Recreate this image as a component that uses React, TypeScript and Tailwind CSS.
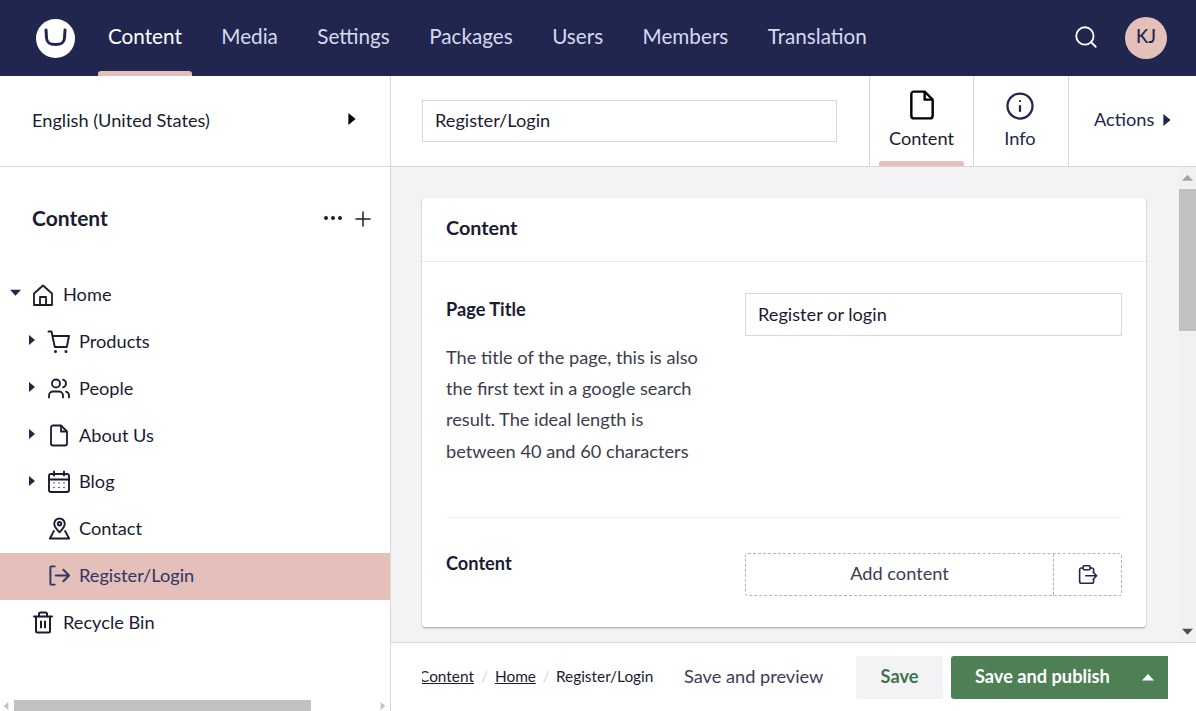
import { Info, Search, Users, Ellipsis, Plus } from "lucide-react";
import type { ReactNode } from "react";

const navItems = ["Media", "Settings", "Packages", "Users", "Members", "Translation"];

const PageIcon = ({ className }: { className: string }) => (
  <svg viewBox="0 0 24 24" fill="none" stroke="currentColor" strokeWidth="1.800" strokeLinejoin="round" className={className}>
    <path d="M14 2H6a2 2 0 0 0-2 2v16a2 2 0 0 0 2 2h12a2 2 0 0 0 2-2V8z" />
    <path d="M14 2v6h6" />
  </svg>
);

const HomeIcon = () => (
  <svg viewBox="0 0 24 24" fill="none" stroke="currentColor" strokeWidth="1.800" strokeLinejoin="round" className="h-[26px] w-[26px]">
    <path d="M3 22V10.500L12 2.500l9 8V22z" />
    <path d="M9 22v-8h6v8" />
  </svg>
);

const CartIcon = () => (
  <svg viewBox="0 0 24 24" fill="none" stroke="currentColor" strokeWidth="1.900" strokeLinecap="round" strokeLinejoin="round" className="h-[24px] w-[24px]">
    <path d="M1.500 1.500h3l3.300 15.500h12l2.200-11H5.500" />
    <circle cx="8.500" cy="21.500" r="0.600" fill="currentColor" />
    <circle cx="19" cy="21.500" r="0.600" fill="currentColor" />
  </svg>
);

const CalendarIcon = () => (
  <svg viewBox="0 0 24 24" fill="none" stroke="currentColor" strokeWidth="1.900" strokeLinecap="round" strokeLinejoin="round" className="h-[24px] w-[24px]">
    <rect x="2" y="4" width="20" height="18" rx="2" />
    <path d="M7 1.500v4M17 1.500v4M2 9.500h20" />
    <path strokeWidth="1.400" d="M7 13h.01M12 13h.01M17 13h.01M7 17.500h.01M12 17.500h.01M17 17.500h.01" />
  </svg>
);

const PinIcon = () => (
  <svg viewBox="0 0 24 24" fill="none" stroke="currentColor" strokeWidth="2" strokeLinejoin="round" className="h-[23px] w-[23px]">
    <path d="M12 16c-3-3.200-5.500-5.800-5.500-9a5.500 5.500 0 0 1 11 0c0 3.200-2.500 5.800-5.500 9z" />
    <circle cx="12" cy="7" r="1.800" />
    <path d="M6.500 14 2 22.500h20L17.500 14" />
  </svg>
);

const LoginIcon = () => (
  <svg viewBox="0 0 24 24" fill="none" stroke="currentColor" strokeWidth="2" strokeLinecap="round" strokeLinejoin="round" className="h-[23px] w-[23px]">
    <path d="M7 2.500H3.500a1 1 0 0 0-1 1v17a1 1 0 0 0 1 1H7" />
    <path d="M8 12h14M16 6l6 6-6 6" />
  </svg>
);

const BinIcon = () => (
  <svg viewBox="0 0 24 24" fill="none" stroke="currentColor" strokeWidth="2" strokeLinecap="round" strokeLinejoin="round" className="h-[25px] w-[25px]">
    <path d="M3 6h18M5 6v14.500a1.500 1.500 0 0 0 1.500 1.500h11a1.500 1.500 0 0 0 1.500-1.500V6" />
    <path d="M8 6V3.500A1.500 1.500 0 0 1 9.500 2h5A1.500 1.500 0 0 1 16 3.500V6" />
    <path d="M10 11v6M14 11v6" />
  </svg>
);

const PasteIcon = () => (
  <svg viewBox="0 0 24 24" fill="none" stroke="currentColor" strokeWidth="1.800" strokeLinecap="round" strokeLinejoin="round" className="h-[21px] w-[21px]">
    <path d="M7 4.500H5a2 2 0 0 0-2 2V20a2 2 0 0 0 2 2h12a2 2 0 0 0 2-2v-2.500M19 9.500v-3a2 2 0 0 0-2-2h-2" />
    <rect x="7" y="2" width="8" height="4.500" rx="1" />
    <path d="M10 13.500h12.500M18.500 9.500l4 4-4 4" />
  </svg>
);

const Caret = ({ down, up, className }: { down?: boolean; up?: boolean; className: string }) => (
  <svg viewBox="0 0 10 10" fill="currentColor" className={`shrink-0 ${className}`}>
    {down ? <path d="M0 2.500h10L5 8z" /> : up ? <path d="M0 8h10L5 2.500z" /> : <path d="M2 0v10l6-5z" />}
  </svg>
);

const TreeRow = ({ icon, label, depth, caret, active }: { icon: ReactNode; label: string; depth: 0 | 1; caret?: "down" | "right"; active?: boolean }) => (
  <div className={`flex h-[46.800px] items-center pb-[1px] ${depth === 0 ? "pl-[9px]" : "pl-[25px]"} ${active ? "bg-[#e5bfb9] text-[#2f3564]" : "text-[#1b1b32]"}`}>
    <div className="flex w-[10px] text-[#21264f]">
      {caret === "down" && <Caret down className="mb-[4px] ml-[1px] h-[11px] w-[11px]" />}
      {caret === "right" && <Caret className="mb-[3px] ml-[2px] h-[10px] w-[10px]" />}
    </div>
    <div className="ml-[12px] flex w-[24px] justify-center">{icon}</div>
    <span className="ml-[8px] text-[18.200px]">{label}</span>
  </div>
);

export default function App() {
  return (
    <div className="flex h-[711px] w-[1196px] flex-col overflow-hidden bg-white font-['Lato',sans-serif] text-[#1b1b32]">
      <header className="flex h-[76px] shrink-0 items-center bg-[#21264f] text-[#d5d9ee]">
        <div className="ml-[36px] flex h-[39px] w-[39px] items-center justify-center rounded-full bg-white">
          <svg viewBox="0 0 39 39" fill="none" stroke="#21264f" strokeWidth="3" strokeLinecap="round" className="h-[39px] w-[39px]">
            <path d="M10 11l.5 8c.3 5 3 6.500 9 6.500s8.700-1.500 9-6.500l.5-8" />
          </svg>
        </div>
        <nav className="ml-[33px] flex h-full items-center gap-[39.400px] text-[20.700px]">
          <div className="relative flex h-full items-center text-white">
            <span className="mb-[2px]">Content</span>
            <div className="absolute bottom-0 left-[-10px] right-[-10px] h-[5px] rounded-t-[3px] bg-[#e5bfb9]" />
          </div>
          {navItems.map((item) => (
            <span key={item} className="mb-[2px]">{item}</span>
          ))}
        </nav>
        <Search className="mb-[2px] ml-auto h-[26px] w-[26px] text-white" strokeWidth={1.700} />
        <div className="ml-[26px] mr-[29px] flex h-[42px] w-[42px] items-center justify-center rounded-full bg-[#e5bfb9] pb-[2px] text-[18.200px] font-medium text-[#21264f]">
          KJ
        </div>
      </header>

      <div className="flex min-h-0 flex-1">
        <aside className="relative flex w-[391px] shrink-0 flex-col border-r border-[#d8d7d9]">
          <div className="flex h-[91px] shrink-0 items-center justify-between border-b border-[#d8d7d9] pb-[1px] pl-[32px] pr-[32px] text-[18.200px]">
            <span>English (United States)</span>
            <Caret className="mb-[3px] h-[12px] w-[12px] text-black" />
          </div>
          <div className="flex items-center justify-between pl-[32px] pr-[15px] pt-[35px]">
            <h2 className="text-[21px] font-bold">Content</h2>
            <div className="flex items-center gap-[6px]">
              <Ellipsis className="h-[24px] w-[24px]" strokeWidth={2} />
              <Plus className="mt-[3px] h-[24px] w-[24px]" strokeWidth={1.500} />
            </div>
          </div>
          <div className="mt-[38.500px]">
            <TreeRow depth={0} caret="down" icon={<HomeIcon />} label="Home" />
            <TreeRow depth={1} caret="right" icon={<CartIcon />} label="Products" />
            <TreeRow depth={1} caret="right" icon={<Users className="h-[25px] w-[25px]" strokeWidth={1.800} />} label="People" />
            <TreeRow depth={1} caret="right" icon={<PageIcon className="h-[25px] w-[25px]" />} label="About Us" />
            <TreeRow depth={1} caret="right" icon={<CalendarIcon />} label="Blog" />
            <TreeRow depth={1} icon={<PinIcon />} label="Contact" />
            <TreeRow depth={1} active icon={<LoginIcon />} label="Register/Login" />
            <TreeRow depth={0} icon={<BinIcon />} label="Recycle Bin" />
          </div>
          <div className="absolute bottom-0 left-0 right-0 flex h-[11px] items-center bg-white">
            <Caret className="ml-[2px] h-[8px] w-[8px] rotate-180 text-[#c4c4c4]" />
            <div className="ml-[4px] h-[11px] w-[297px] bg-[#c1c1c1]" />
            <Caret className="ml-auto mr-[3px] h-[8px] w-[8px] text-[#c4c4c4]" />
          </div>
        </aside>

        <main className="flex min-w-0 flex-1 flex-col">
          <div className="flex h-[91px] shrink-0 items-stretch border-b border-[#d8d7d9]">
            <div className="flex flex-1 items-center pl-[31px]">
              <div className="flex h-[42px] w-[415px] items-center border border-[#d8d7d9] px-[12px] pb-[1px] text-[18.200px]">Register/Login</div>
            </div>
            <div className="relative flex w-[104px] flex-col items-center border-l border-[#d8d7d9] pt-[13px]">
              <PageIcon className="h-[32px] w-[32px] text-black" />
              <span className="mt-[4px] text-[18.200px]">Content</span>
              <div className="absolute bottom-0 left-[9px] right-[9px] h-[5px] rounded-t-[3px] bg-[#e5bfb9]" />
            </div>
            <div className="flex w-[95px] flex-col items-center border-l border-[#d8d7d9] pr-[2px] pt-[15px] text-[#21264f]">
              <Info className="h-[30px] w-[30px]" strokeWidth={1.800} />
              <span className="mt-[4px] text-[18.200px]">Info</span>
            </div>
            <div className="flex w-[128px] items-center border-l border-[#d8d7d9] pb-[3px] pl-[25px] text-[18.200px] text-[#21264f]">
              Actions
              <Caret className="ml-[7px] h-[12px] w-[12px]" />
            </div>
          </div>

          <div className="flex min-h-0 flex-1 bg-[#f3f3f5]">
            <div className="min-w-0 flex-1 pl-[31px] pr-[33px] pt-[31px]">
              <section className="h-[429px] rounded-[3px] bg-white shadow-[0_1px_2px_rgba(0,0,0,0.35)]">
                <div className="flex h-[64px] items-center border-b border-[#e9e9eb] px-[24px] pb-[4px] text-[19.800px] font-bold">Content</div>
                <div className="mx-[24px] flex h-[256px] border-b border-[#f0f0f2] pt-[31px]">
                  <div className="w-[299px]">
                    <h3 className="text-[18.200px] font-bold leading-[32px]">Page Title</h3>
                    <p className="mt-[16.500px] w-[260px] text-[18.200px] leading-[31.400px] text-[#3c3c4c]">
                      The title of the page, this is also the first text in a google search result. The ideal length is between 40 and 60 characters
                    </p>
                  </div>
                  <div className="flex h-[43px] w-[377px] items-center border border-[#d8d7d9] px-[12px] text-[18.200px]">Register or login</div>
                </div>
                <div className="flex px-[24px] pt-[35px]">
                  <h3 className="w-[299px] text-[18.200px] font-bold leading-[20px]">Content</h3>
                  <div className="flex h-[43px] w-[377px] rounded-[3px] border border-dashed border-[#b5b5bb] text-[18.200px] text-[#3c3c53]">
                    <div className="flex flex-1 items-center justify-center pb-[1px]">Add content</div>
                    <div className="flex w-[68px] items-center justify-center border-l border-dashed border-[#b5b5bb] text-[#21264f]">
                      <PasteIcon />
                    </div>
                  </div>
                </div>
              </section>
            </div>
            <div className="flex w-[17px] shrink-0 flex-col items-center bg-[#f1f1f1]">
              <Caret up className="mt-[5px] h-[11px] w-[11px] text-[#a3a3a3]" />
              <div className="mt-[6px] h-[142px] w-full bg-[#c1c1c1]" />
              <Caret down className="mb-[5px] mt-auto h-[11px] w-[11px] text-[#505050]" />
            </div>
          </div>

          <footer className="flex h-[69px] shrink-0 items-center border-t border-[#d8d7d9] pl-[31px] pr-[28px]">
            <div className="flex w-[233px] items-center overflow-hidden text-[15.400px]">
              <span className="ml-[-3px] underline">Content</span>
              <span className="mx-[7px] text-[#d8d7d9]">/</span>
              <span className="underline">Home</span>
              <span className="mx-[6.500px] text-[#d8d7d9]">/</span>
              <span className="shrink-0">Register/Login</span>
            </div>
            <span className="ml-[29px] text-[18.200px] text-[#3c3c53]">Save and preview</span>
            <div className="ml-auto flex h-[43px] w-[87px] items-center justify-center rounded-l-[3px] bg-[#f3f3f5] text-[18.200px] font-bold text-[#42714d]">Save</div>
            <div className="ml-[8px] flex h-[43px] w-[217px] items-center rounded-l-[3px] bg-[#4e8055] pl-[24px] text-[18.200px] font-bold text-white">
              Save and publish
              <Caret up className="ml-auto mr-[14px] h-[12px] w-[12px]" />
            </div>
          </footer>
        </main>
      </div>
    </div>
  );
}
